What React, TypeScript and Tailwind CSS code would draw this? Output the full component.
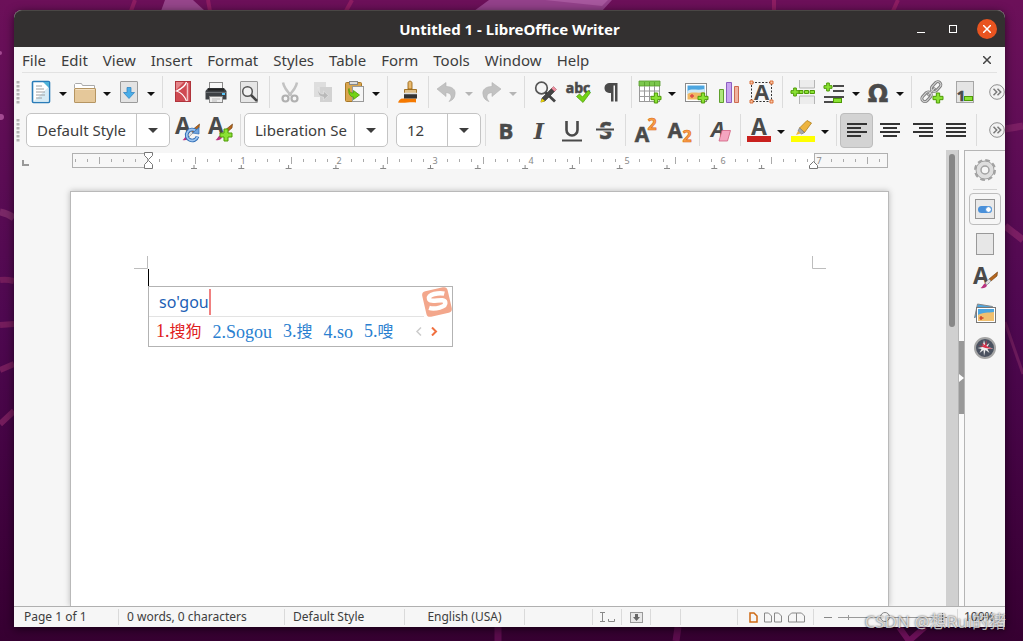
import type { ReactNode } from 'react'

const menus = ['File', 'Edit', 'View', 'Insert', 'Format', 'Styles', 'Table', 'Form', 'Tools', 'Window', 'Help']

const INK = '#4a4a4a'

function Svg({ children, size = 26 }: { children: ReactNode; size?: number }) {
  return (
    <svg width={size} height={size} viewBox="0 0 26 26" fill="none" className="shrink-0 overflow-visible" aria-hidden="true">
      {children}
    </svg>
  )
}

function Glyph({ x, y, size, children, fill = INK, stroke = 'none', family = 'Open Sans', italic = false }: {
  x: number
  y: number
  size: number
  children: ReactNode
  fill?: string
  stroke?: string
  family?: string
  italic?: boolean
}) {
  return (
    <text
      x={x}
      y={y}
      fontSize={size}
      fontWeight={700}
      fontFamily={`${family}, sans-serif`}
      fontStyle={italic ? 'italic' : 'normal'}
      textAnchor="middle"
      fill={fill}
      stroke={stroke}
      strokeWidth={0.6}
    >
      {children}
    </text>
  )
}

function Plus({ x, y, s = 10 }: { x: number; y: number; s?: number }) {
  const t = s / 3
  return (
    <path
      d={`M${x + t} ${y}h${t}v${t}h${t}v${t}h-${t}v${t}h-${t}v-${t}h-${t}v-${t}h${t}z`}
      fill="#8ae234"
      stroke="#4e9a06"
      strokeWidth="1"
      strokeLinejoin="round"
    />
  )
}

function Brush() {
  return (
    <g>
      <path d="M25.500 7l-8.500 7 2 2 6-5z" fill="#b5651d" stroke="#6b3a0a" strokeWidth=".6" />
      <path d="M17 14l-4 4 2 2 4-4z" fill="#ddd" stroke="#888" strokeWidth=".6" />
      <path d="M13 18.500c-2 .5-2 3-4.500 4.500 3 .5 5.500 0 6.500-2.500z" fill="#b83280" />
    </g>
  )
}

const icons = {
  newDoc: (
    <Svg>
      <rect x="4.500" y="2.500" width="17" height="21" rx="1" fill="#fff" stroke="#2a7cb8" strokeWidth="1.600" />
      <path d="M5.500 22.500h15V8z" fill="#d6ebf5" />
      <path d="M15 3h6v6z" fill="#4fb3d9" />
      <path d="M8 7h6M8 10h8M8 13h9M8 16h9M8 19h6" stroke="#a0a0a0" />
    </Svg>
  ),
  open: (
    <Svg>
      <path d="M2.500 9V5.500l1-1h6l1 2h12v4" fill="#fff" stroke="#aaa" />
      <rect x="2.500" y="9.500" width="21" height="14" rx=".5" fill="#e5c89a" stroke="#b59562" />
      <path d="M3.500 10.500h19" stroke="#f5e2c3" />
    </Svg>
  ),
  save: (
    <Svg>
      <rect x="4.500" y="2.500" width="17" height="21" rx=".5" fill="#e3e3e3" stroke="#9b9b9b" />
      <path d="M11 8.500h4v5h3.500L13 19.500 7.500 13.500H11z" fill="#4aaee8" stroke="#2a7fc0" strokeWidth=".7" />
    </Svg>
  ),
  pdf: (
    <Svg>
      <rect x="5.500" y="2.500" width="15" height="20" fill="#cf4a52" stroke="#b0343c" />
      <path d="M6 3h8L6 11z" fill="#e5868a" />
      <path d="M16.500 3c-1.500 5-5.500 7-10 9 5 1.500 8 5 10 10" stroke="#fff" strokeWidth="1.300" />
      <path d="M17.500 4v18" stroke="#f3c3c5" strokeWidth="1.500" />
    </Svg>
  ),
  print: (
    <Svg>
      <rect x="6.500" y="3.500" width="13" height="8" fill="#f8f8f8" stroke="#888" />
      <path d="M5 9h16l2.500 3v8.500h-21V12z" fill="#3d4145" />
      <path d="M5 10.500h16" stroke="#222" strokeWidth="2" />
      <path d="M3 13.500h20" stroke="#6a6e72" />
      <rect x="6.500" y="17.500" width="13" height="6" fill="#eee" stroke="#888" />
      <path d="M9 20h8M9 22h5" stroke="#bbb" />
      <rect x="19" y="14" width="3" height="2" fill="#5ac8fa" />
    </Svg>
  ),
  preview: (
    <Svg>
      <rect x="4.500" y="2.500" width="17" height="21" rx=".5" fill="#e6e6e6" stroke="#999" />
      <circle cx="11.500" cy="12.500" r="4.800" fill="#f2f2f2" stroke="#555" strokeWidth="1.500" />
      <path d="M15 16l6 6" stroke="#444" strokeWidth="2.500" />
    </Svg>
  ),
  cut: (
    <Svg>
      <path d="M6 3.500c1 5 4 9 8.500 13M20 3.500c-1 5-4 9-8.500 13" stroke="#c2c2c2" strokeWidth="2.500" />
      <circle cx="8.500" cy="19.500" r="3" stroke="#b0b0b0" strokeWidth="2.200" />
      <circle cx="17.500" cy="19.500" r="3" stroke="#b0b0b0" strokeWidth="2.200" />
    </Svg>
  ),
  copy: (
    <Svg>
      <rect x="4" y="3" width="12" height="15" fill="#dedede" />
      <rect x="10" y="8" width="12" height="15" fill="#d2d2d2" />
      <path d="M8 8c0 5 2 7 5.500 7v-3l5 4.500-5 4.500v-3C9 18 7 14 8 8z" fill="#b9b9b9" stroke="#e8e8e8" strokeWidth=".6" />
    </Svg>
  ),
  paste: (
    <Svg>
      <rect x="4.500" y="3.500" width="16" height="19" rx="1" fill="#d9a54e" stroke="#a87726" />
      <rect x="8.500" y="2.500" width="8" height="3" fill="#ddd" stroke="#888" />
      <rect x="11.500" y="7.500" width="11" height="15" fill="#f5f5f5" stroke="#999" />
      <path d="M8 9.500c0 4 2 4.500 4.500 4.500V11.500l6 4.500-6 4.500V18C9 18 7 14 8 9.500z" fill="#73d216" stroke="#4e9a06" strokeWidth=".8" />
    </Svg>
  ),
  clone: (
    <Svg>
      <path d="M3 23.500c2-5 5-4 8-4h10v4c-6-1-11 1-18 0z" fill="#f57900" />
      <path d="M13 10V4c0-2.500 4-2.500 4 0v6z" fill="#e9b96e" stroke="#8f5902" strokeWidth=".8" />
      <path d="M9.500 10.500h12v5h-12z" fill="#dfc08a" stroke="#8f5902" strokeWidth=".8" />
      <path d="M9 15h13v4.500H9z" fill="#333" />
      <path d="M9 14.500h13" stroke="#ddd" strokeWidth="1.500" />
    </Svg>
  ),
  undo: (
    <Svg>
      <path d="M3 10L12 3.500v4c6 0 10 3 9 8-.5 4-3 6-6 7 3-3 3.500-8.500-3-9v4z" fill="#c2c2c2" stroke="#b2b2b2" strokeWidth=".6" />
    </Svg>
  ),
  redo: (
    <Svg>
      <path d="M23 10L14 3.500v4c-6 0-10 3-9 8 .5 4 3 6 6 7-3-3-3.500-8.500 3-9v4z" fill="#c2c2c2" stroke="#b2b2b2" strokeWidth=".6" />
    </Svg>
  ),
  find: (
    <Svg>
      <circle cx="9.500" cy="9" r="5.800" fill="#f5f5f5" stroke="#555" strokeWidth="1.700" />
      <path d="M13.500 13.500l9.500 9" stroke="#444" strokeWidth="2.800" />
      <path d="M9 23l1-4L20 9l3 3L13 22z" fill="#444" stroke="#333" strokeWidth=".6" />
      <path d="M8.500 23.500l1.500-4 3 2.500z" fill="#edd400" />
      <path d="M19.500 9.500l2-2 3 3-2 2z" fill="#ef8f9f" stroke="#a05060" strokeWidth=".5" />
    </Svg>
  ),
  spell: (
    <Svg>
      <Glyph x={13} y={14} size={14} stroke={INK}>abc</Glyph>
      <path d="M11.500 17.500l3-2.500 3 3 5.500-6.500 2.500 2L18 23.500z" fill="#73d216" stroke="#4e9a06" strokeWidth=".7" />
    </Svg>
  ),
  pilcrow: (
    <Svg>
      <path d="M19.500 4v18.500H17V6.500h-1.500v16H13V14C8.500 14 6.500 12 6.500 9s2-5 6-5z" fill={INK} />
    </Svg>
  ),
  table: (
    <Svg>
      <rect x="2.500" y="2.500" width="20" height="20" fill="#fff" stroke="#999" />
      <path d="M2 2h21v5H2z" fill="#7bc74d" stroke="#569a2b" strokeWidth=".8" />
      <path d="M7.500 7v15.500M12.500 7v15.500M17.500 7v15.500M2.500 12h20M2.500 17.500h20" stroke="#9a9a9a" />
      <path d="M7.500 3v4M12.500 3v4M17.500 3v4" stroke="#569a2b" strokeWidth=".8" />
      <Plus x={14} y={14} />
    </Svg>
  ),
  image: (
    <Svg>
      <rect x="2.500" y="4.500" width="21" height="18" fill="#fff" stroke="#8a8a8a" />
      <path d="M4.500 6.500h17v8h-17z" fill="#4da6e0" />
      <path d="M4.500 12c4-3 10 0 17-2v6h-17z" fill="#cfe8f5" />
      <path d="M4.500 15c5-3 10 0 17-2v7.500h-17z" fill="#f0b865" />
      <path d="M7 17h4M9 15v4" stroke="#d44" strokeWidth="1.300" />
      <Plus x={15} y={14} />
    </Svg>
  ),
  chart: (
    <Svg>
      <path d="M3.500 10.500h4v13h-4z" fill="#aee67c" stroke="#5fa02c" />
      <path d="M10.500 3.500h5v20h-5z" fill="#c9a4f0" stroke="#8c5fc0" />
      <path d="M18.500 7.500h4v16h-4z" fill="#f0b2a0" stroke="#cc6a50" />
    </Svg>
  ),
  textBox: (
    <Svg>
      <rect x="2.500" y="3.500" width="20" height="19" stroke="#333" strokeDasharray="2 1.500" />
      <Glyph x={12.700} y={21} size={22}>A</Glyph>
      <path d="M1 2h3v3H1zM21 2h3v3h-3zM1 21h3v3H1zM21 21h3v3h-3z" fill="#f5c6a8" stroke="#d9652a" strokeWidth=".9" />
    </Svg>
  ),
  pageBreak: (
    <Svg>
      <path d="M9.500 1v8h15V1M9.500 25v-8h15v8" fill="#ececec" stroke="#b5b5b5" />
      <path d="M9 11.500h4v3H9zM14.500 11.500h4v3h-4zM20 11.500h4.500v3H20z" fill="#8ae234" stroke="#4e9a06" />
      <Plus x={1} y={9} s={8} />
    </Svg>
  ),
  field: (
    <Svg>
      <path d="M12 7h11M12 12h11M3 18h20M3 23h9" stroke={INK} strokeWidth="2" />
      <Plus x={3} y={4} s={8} />
      <rect x="12.500" y="19.500" width="8" height="4" fill="#8ae234" stroke="#4e9a06" />
    </Svg>
  ),
  omega: (
    <Svg>
      <Glyph x={13} y={22.500} size={24} family="DejaVu Sans" stroke={INK}>Ω</Glyph>
    </Svg>
  ),
  link: (
    <Svg>
      <g transform="rotate(-47 12 13)" stroke="#7d7d7d" strokeWidth="3">
        <rect x="0" y="10" width="11" height="6" rx="3" />
        <rect x="14" y="10" width="11" height="6" rx="3" />
        <path d="M7 13h11" />
      </g>
      <g transform="rotate(-47 12 13)" stroke="#d5d5d5">
        <rect x="0" y="10" width="11" height="6" rx="3" />
        <rect x="14" y="10" width="11" height="6" rx="3" />
        <path d="M7 13h11" />
      </g>
      <Plus x={14} y={14} />
    </Svg>
  ),
  footnote: (
    <Svg>
      <rect x="4.500" y="2.500" width="17" height="21" fill="#e4e4e4" stroke="#a6a6a6" />
      <Glyph x={9} y={22} size={15} stroke={INK}>1</Glyph>
      <rect x="12.500" y="17.500" width="8" height="4" fill="#8ae234" stroke="#4e9a06" />
    </Svg>
  ),
  styleUpdate: (
    <Svg>
      <Glyph x={9} y={17} size={23}>A</Glyph>
      <Brush />
      <path d="M22 14a5.500 5.500 0 1 0 1.500 5.500" stroke="#2f6db5" strokeWidth="3.600" />
      <path d="M22 14a5.500 5.500 0 1 0 1.500 5.500" stroke="#9cc4f0" strokeWidth="1.800" />
      <path d="M18.500 16l6.500 1v-6.500z" fill="#6ea3dd" stroke="#2f6db5" strokeWidth=".7" />
    </Svg>
  ),
  styleNew: (
    <Svg>
      <Glyph x={9} y={17} size={23}>A</Glyph>
      <Brush />
      <Plus x={13} y={12} s={12} />
    </Svg>
  ),
  bold: (
    <Svg>
      <Glyph x={13} y={21.500} size={22} stroke={INK}>B</Glyph>
    </Svg>
  ),
  italic: (
    <Svg>
      <Glyph x={13} y={21.500} size={22} family="DejaVu Serif" italic>I</Glyph>
    </Svg>
  ),
  underline: (
    <Svg>
      <path d="M7.500 4v9a5.500 5.500 0 0 0 11 0V4" stroke={INK} strokeWidth="2.600" />
      <path d="M3 23.500h20" stroke={INK} strokeWidth="2" />
    </Svg>
  ),
  strike: (
    <Svg>
      <Glyph x={13.500} y={21.500} size={23} stroke={INK}>S</Glyph>
      <path d="M4 12.500h18" stroke="#f6f6f6" strokeWidth="4" />
      <path d="M4 12.500h18" stroke={INK} strokeWidth="2" />
    </Svg>
  ),
  superscript: (
    <Svg>
      <Glyph x={9} y={25} size={21} stroke={INK}>A</Glyph>
      <Glyph x={19} y={13} size={16} fill="#f9a04a" stroke="#d9650a">2</Glyph>
    </Svg>
  ),
  subscript: (
    <Svg>
      <Glyph x={9} y={21} size={21} stroke={INK}>A</Glyph>
      <Glyph x={21} y={25} size={16} fill="#f9a04a" stroke="#d9650a">2</Glyph>
    </Svg>
  ),
  clear: (
    <Svg>
      <Glyph x={11} y={20} size={22} italic>A</Glyph>
      <path d="M15 13.500h8.500l-3 10.500h-8.500z" fill="#f4a5c0" stroke="#d0607f" strokeWidth=".8" />
    </Svg>
  ),
  fontColor: (
    <Svg>
      <Glyph x={13} y={18} size={23}>A</Glyph>
      <path d="M1 19h24v6H1z" fill="#c9211e" />
    </Svg>
  ),
  highlight: (
    <Svg>
      <path d="M17 3.500l4.500 2.500-7 9.500-5-4.500z" fill="#edb43e" stroke="#b07d18" strokeWidth=".8" />
      <path d="M9.500 11l5 4.500-3 1.500-3.500-3z" fill="#aaa" stroke="#777" strokeWidth=".7" />
      <path d="M8 14l2.500 2.500L6 18z" fill="#edb43e" />
      <path d="M1 19h24v6H1z" fill="#ffff00" />
    </Svg>
  ),
  alignLeft: (
    <Svg>
      <path d="M3 7h20M3 11h14M3 15h20M3 19h14" stroke="#333" strokeWidth="2" />
    </Svg>
  ),
  alignCenter: (
    <Svg>
      <path d="M3 7h20M6 11h14M3 15h20M6 19h14" stroke="#333" strokeWidth="2" />
    </Svg>
  ),
  alignRight: (
    <Svg>
      <path d="M3 7h20M9 11h14M3 15h20M9 19h14" stroke="#333" strokeWidth="2" />
    </Svg>
  ),
  justify: (
    <Svg>
      <path d="M3 7h20M3 11h20M3 15h20M3 19h20" stroke="#333" strokeWidth="2" />
    </Svg>
  ),
}

function Tool({ label, active = false, disabled = false, children }: {
  label: string
  active?: boolean
  disabled?: boolean
  children: ReactNode
}) {
  return (
    <button
      type="button"
      aria-label={label}
      aria-pressed={active || undefined}
      disabled={disabled}
      className={`flex h-[35px] w-[33px] shrink-0 items-center justify-center rounded ${
        active ? 'border border-[#bdbdbd] bg-[#d3d3d3]' : ''
      }`}
    >
      {children}
    </button>
  )
}

function DropTool({ label, disabled = false, children }: { label: string; disabled?: boolean; children: ReactNode }) {
  return (
    <div className="flex h-[35px] w-11 shrink-0 items-center">
      <button type="button" aria-label={label} disabled={disabled} className="flex w-[30px] justify-center">
        {children}
      </button>
      <button type="button" aria-label={`${label} options`} disabled={disabled} className="flex w-[14px] justify-center pt-1">
        <svg width="8" height="4" viewBox="0 0 8 4" aria-hidden="true">
          <path d="M0 0h8L4 4z" fill={disabled ? '#b5b5b5' : '#111'} />
        </svg>
      </button>
    </div>
  )
}

function Sep() {
  return (
    <div className="flex w-2 shrink-0 justify-center">
      <span className="h-8 w-px bg-[#dcdcdc]" />
    </div>
  )
}

function Grip() {
  return (
    <svg width="4" height="24" viewBox="0 0 4 24" className="mr-1.5 ml-0.5 shrink-0" aria-hidden="true">
      <path d="M2 1v23" stroke="#b4b4b4" strokeWidth="3" strokeDasharray="2.500 1.500" />
    </svg>
  )
}

function Overflow() {
  return (
    <button type="button" aria-label="More controls" className="ml-auto shrink-0">
      <svg width="16" height="16" viewBox="0 0 16 16" fill="none" aria-hidden="true">
        <circle cx="8" cy="8" r="7.300" fill="#f2f2f2" stroke="#8f8f8f" />
        <path d="M4.500 4.800L7.700 8l-3.200 3.200M8.500 4.800L11.700 8l-3.200 3.200" stroke="#7a7a7a" strokeWidth="1.500" />
      </svg>
    </button>
  )
}

function Combo({ label, value, options, className }: {
  label: string
  value: string
  options: string[]
  className: string
}) {
  return (
    <div className={`relative h-[34px] shrink-0 ${className}`}>
      <select
        aria-label={label}
        defaultValue={value}
        className="h-full w-full appearance-none rounded-[5px] border border-[#c4c4c4] bg-white pr-9 pl-2.5 text-[15px] text-[#3d3d3d]"
      >
        {options.map((option) => (
          <option key={option}>{option}</option>
        ))}
      </select>
      <span className="pointer-events-none absolute inset-y-px right-px flex w-[33px] items-center justify-center border-l border-[#c4c4c4]">
        <svg width="10" height="5" viewBox="0 0 10 5" aria-hidden="true">
          <path d="M0 0h10L5 5z" fill="#3d3d3d" />
        </svg>
      </span>
    </div>
  )
}

function Wallpaper() {
  return (
    <svg
      className="absolute inset-0 h-full w-full"
      viewBox="0 0 1023 641"
      preserveAspectRatio="none"
      fill="none"
      aria-hidden="true"
    >
      <path d="M165 0h28l12 11h-44z" fill="#96468b" />
      <path d="M489 0h123l-10 11H474z" fill="#93418a" />
      <path d="M545 0h63l-6 6z" fill="#a7589e" />
      <path d="M135 0l-4 11M208 0l2 11M352 0l-6 11M774 0v11M898 0l-5 11" stroke="#8d1d62" strokeWidth="4" />
      <path d="M0 280c6-1 10 0 14 1M0 325l14-1M0 370l14-6M0 424l14-13" stroke="#741c5c" strokeWidth="6" />
      <circle cx="0" cy="53" r="2" fill="#a34a92" />
      <circle cx="1" cy="117" r="3" fill="#a34a92" />
      <path d="M0 212c6 1 10 3 14 6" stroke="#7a2867" strokeWidth="7" />
      <path d="M1005 129l18-3M1005 226l18 14" stroke="#7a1e63" strokeWidth="7" />
      <path d="M1005 322l18 52" stroke="#6a1a5a" strokeWidth="3" />
      <path d="M498 627v14M678 627l-2 14" stroke="#5a0c4c" strokeWidth="7" />
      <path d="M899 627l10 14 16-14" stroke="#6b1058" strokeWidth="6" />
    </svg>
  )
}

function TitleBar() {
  return (
    <header className="flex h-[37px] shrink-0 items-center rounded-t-lg border-t border-[#4a4745] bg-[#333030] text-white">
      <div className="w-[105px] shrink-0" />
      <h1 className="flex-1 text-center text-[15px] leading-5 font-bold">Untitled 1 - LibreOffice Writer</h1>
      <div className="flex w-[105px] shrink-0 items-center justify-end gap-6 pr-2">
        <button type="button" aria-label="Minimize" className="h-2 w-2 border-b border-white" />
        <button type="button" aria-label="Maximize" className="h-2 w-2 border border-white" />
        <button
          type="button"
          aria-label="Close window"
          className="-ml-1 flex h-5 w-5 items-center justify-center rounded-full bg-[#e95420]"
        >
          <svg width="8" height="8" viewBox="0 0 8 8" aria-hidden="true">
            <path d="M0 0l8 8M8 0L0 8" stroke="#fff" strokeWidth="1.500" />
          </svg>
        </button>
      </div>
    </header>
  )
}

function MenuBar() {
  return (
    <nav className="mx-2 flex h-[26px] shrink-0 items-center gap-[15px] border-b border-[#e2e2e2]" aria-label="Menu bar">
      {menus.map((menu) => (
        <button key={menu} type="button" className="text-[15px] leading-5">
          {menu}
        </button>
      ))}
      <button type="button" aria-label="Close document" className="mr-1.5 ml-auto">
        <svg width="8" height="8" viewBox="0 0 8 8" aria-hidden="true">
          <path d="M0 0l8 8M8 0L0 8" stroke="#444" strokeWidth="1.500" />
        </svg>
      </button>
    </nav>
  )
}

function StandardToolbar() {
  return (
    <div className="flex h-[37px] shrink-0 items-center" role="toolbar" aria-label="Standard">
      <Grip />
      <DropTool label="New">{icons.newDoc}</DropTool>
      <DropTool label="Open">{icons.open}</DropTool>
      <DropTool label="Save">{icons.save}</DropTool>
      <Sep />
      <Tool label="Export as PDF">{icons.pdf}</Tool>
      <Tool label="Print">{icons.print}</Tool>
      <Tool label="Print preview">{icons.preview}</Tool>
      <Sep />
      <Tool label="Cut" disabled>{icons.cut}</Tool>
      <Tool label="Copy" disabled>{icons.copy}</Tool>
      <DropTool label="Paste">{icons.paste}</DropTool>
      <Sep />
      <Tool label="Clone formatting">{icons.clone}</Tool>
      <Sep />
      <DropTool label="Undo" disabled>{icons.undo}</DropTool>
      <DropTool label="Redo" disabled>{icons.redo}</DropTool>
      <Sep />
      <Tool label="Find and replace">{icons.find}</Tool>
      <Tool label="Spelling">{icons.spell}</Tool>
      <Tool label="Formatting marks">{icons.pilcrow}</Tool>
      <Sep />
      <DropTool label="Insert table">{icons.table}</DropTool>
      <Tool label="Insert image">{icons.image}</Tool>
      <Tool label="Insert chart">{icons.chart}</Tool>
      <Tool label="Insert text box">{icons.textBox}</Tool>
      <Sep />
      <Tool label="Insert page break">{icons.pageBreak}</Tool>
      <DropTool label="Insert field">{icons.field}</DropTool>
      <DropTool label="Special character">{icons.omega}</DropTool>
      <Sep />
      <Tool label="Insert hyperlink">{icons.link}</Tool>
      <Tool label="Insert footnote">{icons.footnote}</Tool>
      <Overflow />
    </div>
  )
}

function FormattingToolbar() {
  return (
    <div className="flex h-10 shrink-0 items-center" role="toolbar" aria-label="Formatting">
      <Grip />
      <Combo label="Paragraph style" value="Default Style" options={['Default Style', 'Heading 1']} className="w-36" />
      <Tool label="Update style">{icons.styleUpdate}</Tool>
      <Tool label="New style">{icons.styleNew}</Tool>
      <Sep />
      <Combo label="Font name" value="Liberation Se" options={['Liberation Se', 'Ubuntu']} className="mr-2 w-36" />
      <Combo label="Font size" value="12" options={['10', '12', '14']} className="w-[85px]" />
      <Sep />
      <Tool label="Bold">{icons.bold}</Tool>
      <Tool label="Italic">{icons.italic}</Tool>
      <Tool label="Underline">{icons.underline}</Tool>
      <Tool label="Strikethrough">{icons.strike}</Tool>
      <Sep />
      <Tool label="Superscript">{icons.superscript}</Tool>
      <Tool label="Subscript">{icons.subscript}</Tool>
      <Sep />
      <Tool label="Clear formatting">{icons.clear}</Tool>
      <Sep />
      <DropTool label="Font color">{icons.fontColor}</DropTool>
      <DropTool label="Highlighting color">{icons.highlight}</DropTool>
      <Sep />
      <Tool label="Align left" active>{icons.alignLeft}</Tool>
      <Tool label="Align center">{icons.alignCenter}</Tool>
      <Tool label="Align right">{icons.alignRight}</Tool>
      <Tool label="Justify">{icons.justify}</Tool>
      <Sep />
      <Overflow />
    </div>
  )
}

// 96px to the inch, with the text area starting 76px in
function Ruler() {
  const ticks = Array.from({ length: 68 }, (_, i) => 76 + (i - 6) * 12).filter((x) => x > 1 && x < 815)
  const tabs = Array.from({ length: 13 }, (_, i) => 123 + i * 47.300)
  return (
    <svg width="818" height="17" viewBox="0 0 818 17" className="ml-[57px] block" aria-hidden="true">
      <rect x="77" width="666" height="16" y="1" fill="#fff" />
      <rect x="1.500" y="1.500" width="75" height="14" fill="#f7f7f7" stroke="#b0b0b0" />
      <rect x="743.500" y="1.500" width="73" height="14" fill="#f7f7f7" stroke="#b0b0b0" />
      {ticks.map((x) => {
        const step = (x - 76) / 12
        if (step % 8 === 0) return null
        return <path key={x} d={step % 4 === 0 ? `M${x + 0.5} 5v7` : `M${x + 0.5} 7v3`} stroke="#aaa" />
      })}
      {tabs.map((x) => (
        <path key={x} d={`M${x - 3} 16.500h6M${x} 13v3`} stroke="#888" />
      ))}
      {[1, 2, 3, 4, 5, 6, 7].map((n) => (
        <text key={n} x={76 + n * 96} y="12" fontSize="9" textAnchor="middle" fill="#888" fontFamily="Noto Sans, sans-serif">
          {n}
        </text>
      ))}
      <path d="M73.500.5h8v3l-4 4-4-4zM73.500 16.500h8v-4l-4-4-4 4z" fill="#fff" stroke="#777" />
      <path d="M738.500 16.500h8v-3l-4-4-4 4z" fill="#fff" stroke="#777" />
    </svg>
  )
}

const candidates = [
  { latin: '1.', han: '搜狗' },
  { latin: '2.Sogou', han: '' },
  { latin: '3.', han: '搜' },
  { latin: '4.so', han: '' },
  { latin: '5.', han: '嗖' },
]

function InputMethodPopup() {
  return (
    <div className="absolute top-[94px] left-[77px] h-[61px] w-[305px] border border-[#b3b3b3] bg-white">
      <div className="flex h-[29px] items-center pl-2.5">
        <span className="border-r-2 border-[#f08080] text-[16px] leading-[26px] text-[#1c5fb5]">so&apos;gou</span>
      </div>
      <div className="mr-7 h-px bg-[#e3e3e3]" />
      <div className="flex h-[29px] items-center gap-[11px] pl-[7px] font-['Liberation_Serif','Noto_Sans_CJK_SC',serif] text-[18px] leading-7 text-[#2a7fd0]">
        {candidates.map(({ latin, han }, i) => (
          <span key={latin} className={i === 0 ? 'text-[#e02020]' : ''}>
            {latin}
            {han && <span className="text-[16px]">{han}</span>}
          </span>
        ))}
        <svg width="23" height="9" viewBox="0 0 23 9" fill="none" className="ml-2.5" aria-hidden="true">
          <path d="M6 .5l-4 4 4 4" stroke="#ccc" strokeWidth="1.500" />
          <path d="M17 .5l4 4-4 4" stroke="#f07040" strokeWidth="2" />
        </svg>
      </div>
      <svg width="30" height="30" viewBox="0 0 30 30" className="absolute top-0 right-0" aria-hidden="true">
        <g transform="rotate(-13 15 15)">
          <rect x="2" y="2" width="26" height="26" rx="4" fill="#f3a78c" />
          <path
            d="M24 8.500c-5-2.500-16-3-16 1.500 0 5 15 2 15 7 0 5-12 5-17 2"
            stroke="#fff"
            strokeWidth="4.500"
            fill="none"
          />
        </g>
      </svg>
    </div>
  )
}

function Sheet() {
  return (
    <div className="relative mt-[22px] ml-14 w-[819px] flex-1 border border-b-0 border-[#b9b9b9] bg-white shadow-[0_0_6px_rgba(0,0,0,0.25)]">
      <svg width="692" height="32" viewBox="0 0 692 32" fill="none" className="absolute top-16 left-[63px]" aria-hidden="true">
        <path d="M13.500 0v12.500H0M678.500 0v12.500H692" stroke="#bdbdbd" />
        <path d="M14.500 13v17" stroke="#000" strokeWidth="1" />
      </svg>
      <InputMethodPopup />
    </div>
  )
}

function SideBar() {
  return (
    <aside className="flex w-[41px] shrink-0 flex-col items-center border-t border-l border-[#b5b5b5] pt-1.5" aria-label="Sidebar">
      <button type="button" aria-label="Sidebar settings">
        <svg width="26" height="26" viewBox="0 0 26 26" fill="none" aria-hidden="true">
          <circle cx="13" cy="13" r="9.500" stroke="#a2a2a2" strokeWidth="3" strokeDasharray="4.500 2.960" />
          <circle cx="13" cy="13" r="9" fill="#dedede" stroke="#a2a2a2" />
          <circle cx="13" cy="13" r="4" fill="#f6f6f6" stroke="#a2a2a2" strokeWidth="1.500" />
        </svg>
      </button>
      <div className="mt-1.5 mb-[3px] h-px w-6 bg-[#d5d5d5]" />
      <button
        type="button"
        aria-label="Properties"
        className="flex h-8 w-8 items-center justify-center rounded border border-[#bdbdbd]"
      >
        <svg width="20" height="20" viewBox="0 0 20 20" fill="none" aria-hidden="true">
          <rect x=".5" y=".5" width="19" height="19" fill="#e9e9e9" stroke="#969696" />
          <rect x="3" y="7" width="14" height="7" rx="3.500" fill="#4a90d9" />
          <circle cx="13.500" cy="10.500" r="2.900" fill="#fff" stroke="#4a90d9" />
        </svg>
      </button>
      <button type="button" aria-label="Page" className="mt-2">
        <svg width="18" height="22" viewBox="0 0 18 22" aria-hidden="true">
          <rect x=".5" y=".5" width="17" height="21" fill="#e7e7e7" stroke="#999" />
        </svg>
      </button>
      <button type="button" aria-label="Styles" className="mt-2.5">
        <Svg>
          <Glyph x={9} y={19} size={23}>A</Glyph>
          <Brush />
        </Svg>
      </button>
      <button type="button" aria-label="Gallery" className="mt-2.5">
        <Svg>
          <path d="M2.500 17l3-14 15 2.500v4" fill="#4da6e0" stroke="#888" />
          <rect x="4.500" y="6.500" width="19" height="15" fill="#fff" stroke="#777" />
          <path d="M6 8h16v6H6z" fill="#4da6e0" />
          <path d="M6 14c5-3 10-2 16-3v9H6z" fill="#f0c070" />
          <path d="M9 15v4M7.500 17h4" stroke="#d0432a" strokeWidth="1.400" />
        </Svg>
      </button>
      <button type="button" aria-label="Navigator" className="mt-2">
        <Svg>
          <circle cx="13" cy="13" r="10" fill="#4b5260" stroke="#a5a5a5" strokeWidth="2" />
          <path d="M12 5l1.500 6 4-3-2 4 6 1.500-6 .5 2 4-4-3-1.500 6-.5-6-4 3 2-4-4-1 5-1z" fill="#eee" />
          <path d="M14.500 5v6l6 3-7-1-7-2.500 5 .5-2-3 3.500 2z" fill="#d8304a" />
        </Svg>
      </button>
    </aside>
  )
}

function WorkArea() {
  return (
    <div className="flex min-h-0 flex-1 border-b border-[#b0b0b0]">
      <main className="flex min-w-0 flex-1 flex-col overflow-hidden">
        <div className="flex shrink-0 items-start pt-0.5">
          <svg width="8" height="8" viewBox="0 0 8 8" className="absolute mt-2 ml-2" aria-hidden="true">
            <path d="M1 0v5h6" stroke="#999" strokeWidth="2" fill="none" />
          </svg>
          <Ruler />
        </div>
        <Sheet />
      </main>
      <div className="w-3 shrink-0 bg-[#d0d0d0] px-[3px] pt-1">
        <div className="h-[173px] w-1.5 rounded-full bg-[#878787]" />
      </div>
      <div className="flex w-1.5 shrink-0 flex-col border-l border-[#b5b5b5] bg-[#fafafa] pt-[191px]">
        <button type="button" aria-label="Hide sidebar" className="flex h-[73px] items-center justify-center bg-[#999]">
          <svg width="5" height="8" viewBox="0 0 5 8" aria-hidden="true">
            <path d="M0 0l5 4-5 4z" fill="#fff" />
          </svg>
        </button>
      </div>
      <SideBar />
    </div>
  )
}

function StatusBar() {
  return (
    <footer className="flex h-5 shrink-0 items-center text-[12px] leading-4 whitespace-nowrap">
      <span className="w-[105px] border-r border-[#dadada] pl-2.5">Page 1 of 1</span>
      <span className="w-[166px] border-r border-[#dadada] pl-2">0 words, 0 characters</span>
      <span className="w-[120px] border-r border-[#dadada] pl-2">Default Style</span>
      <span className="w-[120px] border-r border-[#dadada] text-center">English (USA)</span>
      <span className="h-4 w-[68px] border-r border-[#dadada]" />
      <span className="flex h-4 w-[29px] items-center justify-center border-r border-[#dadada]">
        <svg width="16" height="12" viewBox="0 0 16 12" fill="none" aria-label="Insert mode">
          <path d="M1 1.500h5M3.500 1.500v9M1 10.500h5M9.500 8v2.500h6V8" stroke="#888" />
        </svg>
      </span>
      <span className="flex h-4 w-[29px] items-center justify-center border-r border-[#dadada]">
        <svg width="13" height="11" viewBox="0 0 13 11" fill="none" aria-label="Document saved state">
          <rect x=".5" y=".5" width="12" height="10" fill="#e8e8e8" stroke="#999" />
          <path d="M5 2h3v3h2L6.500 9 3 5h2z" fill="#666" />
        </svg>
      </span>
      <span className="h-4 w-[30px] border-r border-[#dadada]" />
      <span className="h-4 w-[57px] border-r border-[#dadada]" />
      <span className="flex h-4 w-[76px] items-center justify-center gap-1.5 border-r border-[#dadada] pl-0.5">
        <button type="button" aria-label="Single-page view">
          <svg width="9" height="11" viewBox="0 0 9 11" fill="none" aria-hidden="true">
            <path d="M1 1h4l3 3v6H1z" stroke="#ce6a14" strokeWidth="1.500" />
          </svg>
        </button>
        <button type="button" aria-label="Multiple-page view">
          <svg width="18" height="11" viewBox="0 0 18 11" fill="none" aria-hidden="true">
            <path d="M.5 1h4l3 3v6h-7zM10.500 1h4l3 3v6h-7z" stroke="#888" />
          </svg>
        </button>
        <button type="button" aria-label="Book view">
          <svg width="17" height="11" viewBox="0 0 17 11" fill="none" aria-hidden="true">
            <path d="M8.500 10h-8V4l3-3h5zM8.500 1h5l3 3v6h-8z" stroke="#888" />
          </svg>
        </button>
      </span>
      <span className="flex h-4 w-[144px] items-center gap-1.5 border-r border-[#dadada] px-2.5">
        <button type="button" aria-label="Zoom out" className="h-px w-2 bg-[#888]" />
        <input
          type="range"
          aria-label="Zoom"
          min="0"
          max="100"
          defaultValue="50"
          className="h-3 min-w-0 flex-1 appearance-none bg-[linear-gradient(#999,#999),linear-gradient(#999,#999)] bg-[length:100%_1px,1px_5px] bg-[position:center,10px_center] bg-no-repeat [&::-webkit-slider-thumb]:h-2.5 [&::-webkit-slider-thumb]:w-2.5 [&::-webkit-slider-thumb]:appearance-none [&::-webkit-slider-thumb]:rounded-full [&::-webkit-slider-thumb]:border [&::-webkit-slider-thumb]:border-[#888] [&::-webkit-slider-thumb]:bg-[#f6f6f6]"
        />
        <button type="button" aria-label="Zoom in">
          <svg width="9" height="9" viewBox="0 0 9 9" aria-hidden="true">
            <path d="M0 4.500h9M4.500 0v9" stroke="#888" />
          </svg>
        </button>
      </span>
      <span className="pl-1.5">100%</span>
    </footer>
  )
}

export default function App() {
  return (
    <div className="relative flex h-screen flex-col overflow-hidden bg-linear-to-b from-[#6c1059] via-[#4e0850] to-[#360031] pt-2.5 pr-[18px] pb-[14px] pl-[14px] font-['Noto_Sans','Noto_Sans_CJK_SC',sans-serif] text-[#3d3d3d]">
      <Wallpaper />
      <div className="relative flex min-h-0 flex-1 flex-col rounded-t-lg bg-[#f6f6f6] shadow-[0_2px_10px_rgba(0,0,0,0.6)]">
        <TitleBar />
        <MenuBar />
        <StandardToolbar />
        <FormattingToolbar />
        <WorkArea />
        <StatusBar />
      </div>
      <div className="pointer-events-none absolute right-[17px] bottom-[7px] text-[17px] leading-6 text-white/70 [text-shadow:0_0_2px_rgba(0,0,0,0.8)]">
        CSDN @想Rui的猪
      </div>
    </div>
  )
}
